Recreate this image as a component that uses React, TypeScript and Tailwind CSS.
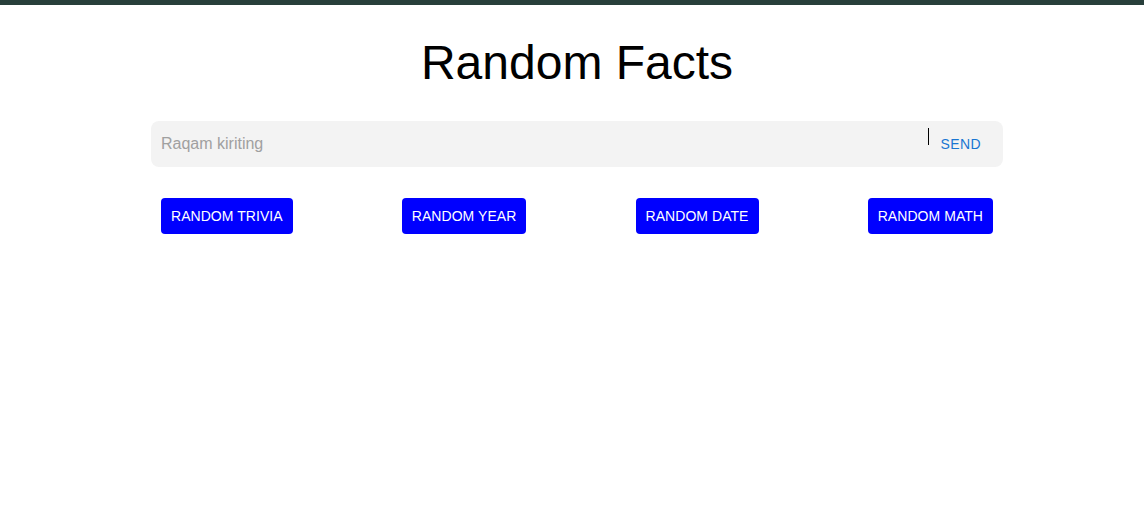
import React from 'react'

const buttons = ['Random Trivia', 'Random Year', 'Random Date', 'Random Math']

const App = () => {
  return (
    <div className="min-h-[521px] bg-white font-['Liberation_Sans',Arial,sans-serif]">
      <div className="h-[5px] bg-[#283f3b]" />
      <div className="pl-[10px]">
        <h1 className="mt-[30px] text-center text-[48px] leading-[56px] text-black">
          Random Facts
        </h1>
        <div className="mx-auto mt-[30px] w-[852px]">
          <div className="flex h-[46px] items-center rounded-lg bg-[#f3f3f3] pl-[10px] pr-[22px]">
            <input
              className="flex-1 bg-transparent text-[16px] text-black outline-none placeholder:text-[#a0a0a0]"
              placeholder="Raqam kiriting"
            />
            <div className="mb-[16px] h-[17px] w-px bg-black" />
            <button className="ml-[12px] text-[14px] uppercase tracking-[0.4px] text-[#1976d2]">
              Send
            </button>
          </div>
          <div className="mt-[31px] flex justify-between px-[10px]">
            {buttons.map((b) => (
              <button
                key={b}
                className="h-[36px] rounded-[4px] bg-[#0000ff] px-[10px] text-[14px] tracking-[0.05px] uppercase text-white"
              >
                {b}
              </button>
            ))}
          </div>
        </div>
      </div>
    </div>
  )
}

export default App
